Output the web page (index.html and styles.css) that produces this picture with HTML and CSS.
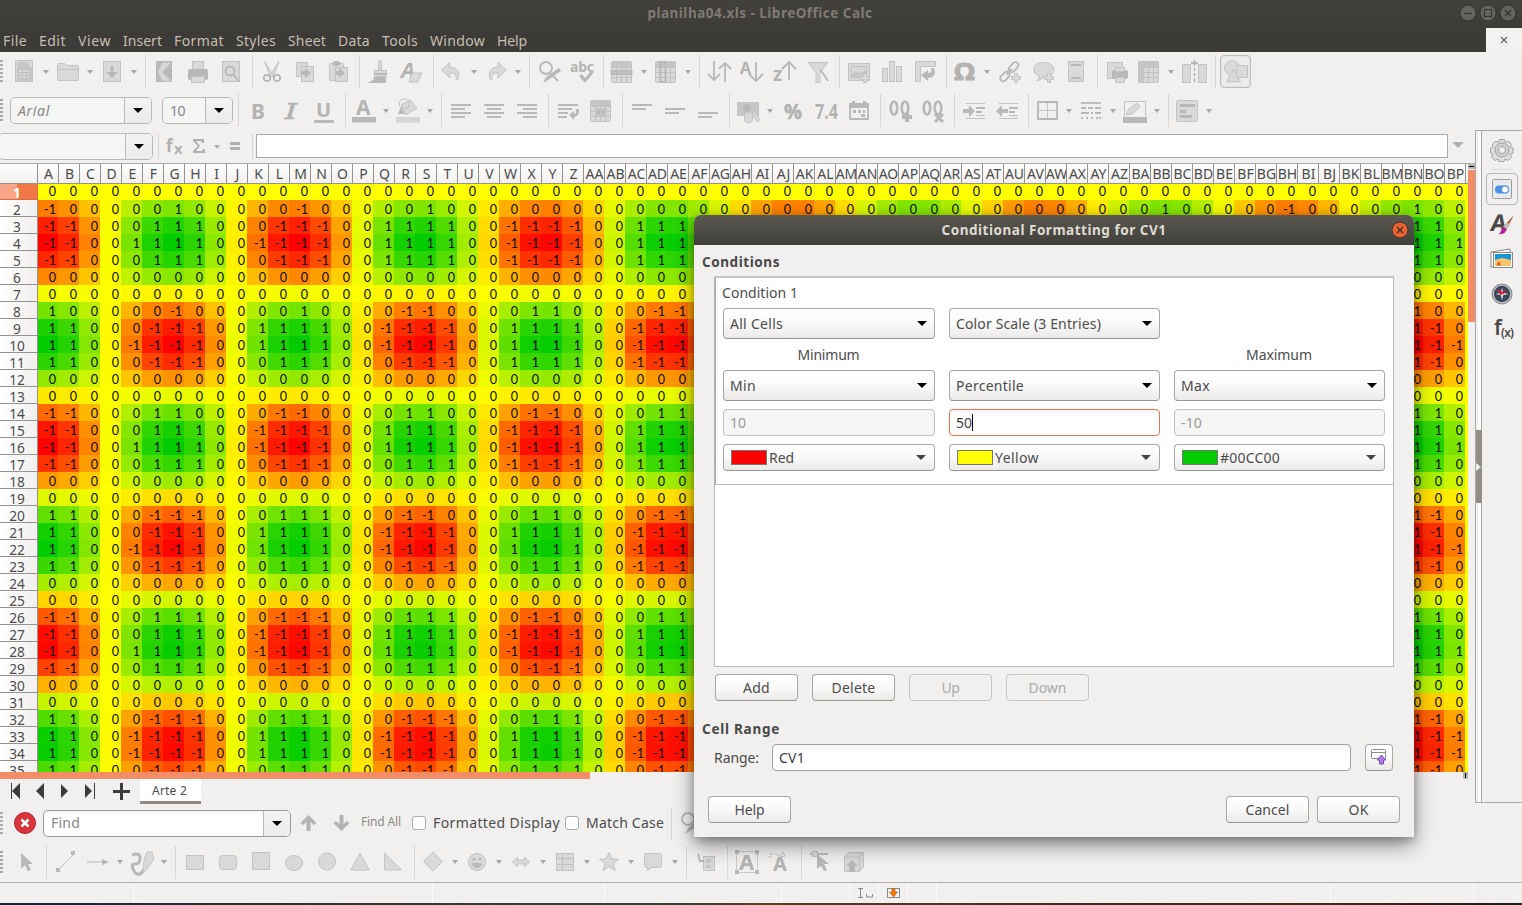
FILE: index.html
```html
<!DOCTYPE html>
<html lang="en">
<head>
<meta charset="utf-8">
<title>planilha04.xls - LibreOffice Calc</title>
<link rel="stylesheet" href="styles.css">
</head>
<body>
<div class="app">
  <header class="titlebar">
    <span class="title" data-w="225">planilha04.xls - LibreOffice Calc</span>
    <div class="winbtns">
      <svg viewBox="0 0 18 18"><circle cx="9" cy="9" r="8"/><path d="M5 9.5h8"/></svg>
      <svg viewBox="0 0 18 18"><circle cx="9" cy="9" r="8"/><path d="M5.5 5.5h7v7h-7z"/></svg>
      <svg viewBox="0 0 18 18"><circle cx="9" cy="9" r="8"/><path d="M6 6l6 6M12 6l-6 6"/></svg>
    </div>
  </header>
  <nav class="menubar">
    <span data-w="24">File</span><span data-w="27">Edit</span><span data-w="33">View</span><span data-w="39">Insert</span><span data-w="50">Format</span><span data-w="40">Styles</span><span data-w="38">Sheet</span><span data-w="32">Data</span><span data-w="36">Tools</span><span data-w="55">Window</span><span data-w="30">Help</span>
    <div class="doc-close"><svg viewBox="0 0 8 8"><path d="M1 1l6 6M7 1l-6 6"/></svg></div>
  </nav>
  <div class="toolbar"><i class="grip"></i><div class="tools" data-items="new+ open+ save+ | export print preview | cut copy paste | brush clear | undo+ redo+ | find spell | rows+ cols+ | sort asc desc filter | image chart pivot | omega+ link comment headfoot | printarea freeze+ split | shapes!"></div></div>
  <div class="toolbar"><i class="grip"></i>
    <div class="combo dim font"><em data-w="32">Arial</em><b></b></div>
    <div class="combo dim size"><span data-w="15">10</span><b></b></div>
    <div class="tools" data-items="| bold italic under | fcolor+ hilite+ | left center right | wrap merge | top middle bottom | money+ percent number date | adddec deldec | indent outdent | border+ dash+ bcolor+ | cond+"></div>
  </div>
  <div class="main">
    <div class="work">
      <div class="formula">
        <div class="combo dim namebox"><span></span><b></b></div>
        <i class="fsep"></i>
        <svg class="fx" viewBox="0 0 80 24"><text x="4" y="18" font-size="17">f</text><text x="12" y="20" font-size="15">x</text><path d="M31 5h11v4h-2l-1-2h-5l4 5-4 5h6l1-2h2v4H31v-2l5-5-5-5z"/><path d="M52 11h6l-3 4z"/><path d="M68 8h10v3H68zM68 13h10v3H68z"/></svg>
        <i class="fsep"></i>
        <div class="finput"></div>
        <svg class="fdrop" viewBox="0 0 12 6"><path d="M0 0h12L6 6z"/></svg>
      </div>
      <div class="sheetwrap">
        <div class="sheet"><div class="colheads" id="heads"></div><div class="rows" id="rows"></div></div>
        <div class="vscroll"><i></i><b></b></div>
      </div>
      <div class="hscroll"><b></b><i></i></div>
      <div class="tabs">
        <svg viewBox="0 0 140 24"><path d="M11 4h1v16h-1zM20 4v16l-8-8zM44 4v16l-8-8zM61 5v14l7-7zM85 5v14l7-7zM94 4h1v16h-1zM113 11h7V4h3v7h7v3h-7v7h-3v-7h-7z"/></svg>
        <div class="tab"><span data-w="35">Arte 2</span></div>
      </div>
    </div>
    <aside class="sidebar">
      <div class="splitter"><i></i></div>
      <div class="deck">
        <svg viewBox="0 0 32 32"><g fill="#dedede" stroke="#a2a2a2"><path d="M13.500 5.500h5l1 3 3-1.500 3 3.500-1.500 2.500 3 1v5l-3 1 1.500 3-3.500 3.500-3-1.500-1 2.500h-5l-1-2.500-3 1.500-3.500-3.500 1.500-3-2.500-1v-5l2.500-1L6.500 10 10 7l2.500 1.500z"/><circle cx="16" cy="16" r="7" fill="#cfcfcf"/><circle cx="16" cy="16" r="3.500" fill="#f1f0ee"/></g></svg>
        <hr>
        <div class="active"><svg viewBox="0 0 32 32"><rect x="6.500" y="6.500" width="19" height="19" rx="1" fill="#e7e9ea" stroke="#9a9fa1"/><rect x="9" y="12.500" width="14" height="8" rx="4" fill="#4a90e2"/><circle cx="19" cy="16.500" r="3.600" fill="#fff" stroke="#4a90e2"/></svg></div>
        <svg viewBox="0 0 32 32"><text x="4" y="23" font-size="23" font-weight="700" fill="#4a4a4a" transform="skewX(-8) translate(3 0)">A</text><path d="M28 7l-11 12 3 3z" fill="#a5592a"/><path d="M21 14l-4 5 3 3 4-5z" fill="#bbb"/><path d="M18 19l3 2.500-3 4-6 1c3-1 3-6 6-7.500z" fill="#b3219a"/></svg>
        <svg viewBox="0 0 32 32"><path d="M5 9l19-3v16L5 24z" fill="#fff" stroke="#888"/><rect x="7.500" y="9.500" width="19" height="15" fill="#fff" stroke="#888"/><path d="M9 11h16v6H9z" fill="#1797d8"/><path d="M9 17l7-2 9 2v6H9z" fill="#f7c46c"/><path d="M12 18l1 2 2-1-1 2 1 2-2-1-2 1z" fill="#e8461c"/></svg>
        <svg viewBox="0 0 32 32"><circle cx="16" cy="16" r="10" fill="#3b485c" stroke="#8e8e8e"/><circle cx="16" cy="16" r="8.800" fill="none" stroke="#c6c6c6" stroke-width="1.300"/><path d="M16 9.500l1.300 5.200 5.200 1.300-5.200 1.300L16 22.500l-1.300-5.200L9.500 16l5.200-1.300z" fill="#d3d7dd"/><path d="M10.500 10.500l7 4-3 3zM20.500 11.500l-3 5-2-2z" fill="#cc1f3a"/></svg>
        <svg viewBox="0 0 32 32"><text x="8" y="22" font-size="21" font-weight="600" fill="#4a4a4a">f</text><text x="15" y="24" font-size="12" font-weight="600" fill="#4a4a4a" textLength="13">(x)</text></svg>
      </div>
    </aside>
  </div>
  <div class="toolbar findbar"><i class="grip"></i>
    <svg class="closefind" viewBox="0 0 22 22"><circle cx="11" cy="11" r="10.500" fill="#d8343a" stroke="#b5242c"/><path d="M7.500 7.500l7 7M14.500 7.500l-7 7" stroke="#fff" stroke-width="2.600"/></svg>
    <div class="combo findbox"><span data-w="29">Find</span><b></b></div>
    <svg class="updown" viewBox="0 0 66 33"><path d="M17.500 8l8 8-2.500 2-3.500-3v9h-4v-9L12 18l-2.500-2zM50.500 24l8-8-2.500-2-3.500 3V8h-4v9L45 14l-2.500 2z"/></svg>
    <span class="findall" data-w="40">Find All</span>
    <i class="check"></i><span class="lab" data-w="127">Formatted Display</span>
    <i class="check"></i><span class="lab" data-w="78">Match Case</span>
    <div class="tools" data-items="| find"></div>
  </div>
  <div class="toolbar drawbar"><i class="grip"></i><div class="tools" data-items="select | line arrow+ curve+ | rect rrect square ellipse circle tri rtri | diamond+ smile+ dbl+ flow+ star+ callout+ | callbox | textbox fontwork | points extrude"></div></div>
  <footer class="status">
    <i style="width:134px"></i><i style="width:298px"></i><i style="width:171px"></i><i style="width:176px"></i><i style="width:67px"></i>
    <i class="mode" style="width:28px"><svg viewBox="0 0 28 18"><path d="M7 4.500h5M9.500 5v9M7 13.500h5M15.500 10v3h6v-3" fill="none" stroke="#888"/></svg></i>
    <i style="width:28px"><svg viewBox="0 0 28 18"><rect x="7.500" y="4.500" width="12" height="9" fill="#f4f4f4" stroke="#888"/><path d="M12 5h3v3h2.500l-4 5-4-5H12z" fill="#f57900" stroke="#b84f00" stroke-width=".6"/></svg></i>
    <i style="width:28px"></i><i style="width:393px"></i><i style="width:142px"></i>
  </footer>
  <div class="desktop"></div>
</div>

<section class="dialog">
  <div class="dtitle"><span data-w="225">Conditional Formatting for CV1</span><svg viewBox="0 0 18 18"><circle cx="9" cy="9" r="8"/><path d="M6 6l6 6M12 6l-6 6"/></svg></div>
  <div class="dbody">
    <h4><span data-w="78">Conditions</span></h4>
    <div class="list">
      <div class="entry">
        <p><span data-w="76">Condition 1</span></p>
        <div class="cols">
          <div class="sel"><span data-w="53">All Cells</span></div>
          <div class="sel"><span data-w="145">Color Scale (3 Entries)</span></div>
          <div></div>
          <div class="cap"><span data-w="62">Minimum</span></div><div></div><div class="cap"><span data-w="66">Maximum</span></div>
          <div class="sel"><span data-w="26">Min</span></div>
          <div class="sel"><span data-w="68">Percentile</span></div>
          <div class="sel"><span data-w="29">Max</span></div>
          <div class="inp off"><span data-w="16">10</span></div>
          <div class="inp focus"><span data-w="16">50</span></div>
          <div class="inp off"><span data-w="21">-10</span></div>
          <div class="sel col"><i class="sw red"></i><span data-w="25">Red</span></div>
          <div class="sel col"><i class="sw yellow"></i><span data-w="44">Yellow</span></div>
          <div class="sel col"><i class="sw green"></i><span data-w="60">#00CC00</span></div>
        </div>
      </div>
    </div>
    <div class="btns"><div class="btn"><span data-w="27">Add</span></div><div class="btn"><span data-w="44">Delete</span></div><div class="btn off"><span data-w="18">Up</span></div><div class="btn off"><span data-w="38">Down</span></div></div>
    <h4 class="cr"><span data-w="78">Cell Range</span></h4>
    <div class="range"><label><span data-w="45">Range:</span></label><div class="inp"><span data-w="26">CV1</span></div>
      <div class="btn pick"><svg viewBox="0 0 20 20"><rect x="2.500" y="1.500" width="14" height="9" rx="1" fill="#fff" stroke="#8b8f8c"/><path d="M3 4.500h13" stroke="#8b8f8c"/><path d="M12.500 7l4.500 5h-2.500v4h-4v-4H8z" fill="#ad7fe0" stroke="#8049b8"/></svg></div></div>
    <div class="foot"><div class="btn"><span data-w="30">Help</span></div><div class="gap"></div><div class="btn"><span data-w="44">Cancel</span></div><div class="btn"><span data-w="20">OK</span></div></div>
  </div>
</section>
<script src="app.js"></script>
</body>
</html>
```
FILE: styles.css
```css
* { box-sizing: border-box; }
body { margin: 0; width: 1522px; height: 905px; overflow: hidden; background: #f1f0ee; color: #4c4c4c; font: 14px/18px "Noto Sans", sans-serif; position: relative; }
span, em { white-space: nowrap; }
.app { display: flex; flex-direction: column; height: 905px; }

.titlebar { height: 28px; flex: none; background: linear-gradient(#42413c, #3d3c37); position: relative; text-align: center; }
.title { font-weight: 700; color: #7f7b74; font-size: 13.500px; line-height: 27px; margin-right: 2px; }
.winbtns { position: absolute; right: 5px; top: 4px; display: flex; gap: 2px; }
.winbtns svg { width: 18px; height: 18px; }
.winbtns circle { fill: #65635d; stroke: #35342f; }
.winbtns path { fill: none; stroke: #35342f; stroke-width: 1.200; }
.menubar { height: 24px; flex: none; background: #3c3b37; color: #c4bfb0; display: flex; gap: 12px; padding-left: 3px; line-height: 26px; }
.doc-close { margin-left: auto; width: 36px; background: #f3f2f1; padding-left: 14px; line-height: 0; }
.doc-close svg { width: 8px; height: 8px; margin-top: 8px; fill: none; stroke: #666; stroke-width: 1.300; }

.toolbar { height: 39px; flex: none; display: flex; align-items: center; }
.grip { width: 3px; height: 23px; margin-right: 5px; flex: none; background: repeating-linear-gradient(#a9a9a7 0 2px, transparent 2px 4px); }
.tools { display: flex; height: 33px; }
.tool { width: 33px; height: 33px; display: flex; align-items: center; padding-left: 5px; flex: none; }
.tool.split { width: 44px; padding-left: 4px; }
.tool svg { width: 24px; height: 24px; flex: none; overflow: visible; }
.tool.split::after { content: ""; border: 3px solid transparent; border-top: 4px solid #a6a6a4; border-bottom: 0; margin-left: 7px; }
.tool.on { border: 1px solid #bcbcba; border-radius: 4px; width: 31px; margin-left: 2px; padding-left: 2px; background: #ececea; box-shadow: inset 0 0 2px #ccc; }
.sep { width: 8px; flex: none; border-left: 5px solid transparent; background: linear-gradient(90deg, #d8d7d5 1px, transparent 1px) content-box; }
.a { fill: #b8b8b8; } .l { fill: #d9d9d9; stroke: #c3c3c3; } .s { fill: none; stroke: #b7b7b7; stroke-width: 1.800; } .t { fill: none; stroke: #c1c1c1; }
.m { fill: #c6c6c6; }
.tool text { fill: #b3b3b3; font-weight: 700; font-family: "Noto Sans", sans-serif; }
.tool text.serif { font-family: "DejaVu Serif", serif; }

.combo { display: flex; align-items: center; height: 27px; border: 1px solid #b9b8b5; border-radius: 5px; background: #f5f5f4; color: #878787; padding-left: 7px; flex: none; overflow: hidden; }
.combo b { margin-left: auto; width: 27px; height: 27px; border-left: 1px solid #b9b8b5; background: linear-gradient(#f3f3f3, #ebebea); display: flex; align-items: center; justify-content: center; }
.combo b::after { content: ""; border: 5px solid transparent; border-top: 5px solid #000; border-bottom: 0; }
.font { width: 142px; margin: 0 10px 0 2px; } .size { width: 71px; }
.namebox { width: 155px; margin-left: -2px; }
.findbox { width: 248px; background: linear-gradient(#f4f4f4, #fff 6px); border-color: #9b9a97; }

.main { flex: 1; display: flex; min-height: 0; }
.work { width: 1475px; display: flex; flex-direction: column; }
.formula { height: 33px; display: flex; align-items: center; flex: none; padding-bottom: 1px; }
.fsep { width: 1px; height: 25px; background: #d8d7d5; margin: 0 3px 0 5px; }
.fx { width: 80px; height: 24px; fill: #b1b1b1; font-weight: 700; margin-right: 5px; }
.finput { width: 1192px; height: 24px; background: #fff; border: 1px solid #aaa; }
.fdrop { width: 12px; height: 6px; fill: #b1b1b1; margin: 0 0 2px 4px; }

.sheetwrap { display: flex; height: 609px; flex: none; }
.sheet { width: 1468px; overflow: hidden; border-top: 1px solid #a6a5a2; }
.colheads, .row { display: flex; }
.colheads { height: 20px; border-bottom: 1px solid #96938e; background: linear-gradient(#fff, #f1f0ee); font-size: 14px; line-height: 19px; }
.colheads div { width: 21px; flex: none; overflow: hidden; border-right: 1px solid #96938e; display: flex; justify-content: center; padding-left: 1px; }
.colheads div:first-child { width: 38px; }
.row { height: 17px; background: #ff0; overflow: hidden; }
.row:first-child { height: 16px; }
.row > * { flex: none; width: 21px; height: 17px; text-align: right; padding-right: 2px; font: 12.600px/19px Lato, sans-serif; color: #0c0c06; }
.row > b + span { width: 20px; }
.row > b { width: 38px; text-align: center; font: 13.700px/20px "Noto Sans", sans-serif; border-right: 1px solid #96938e; border-bottom: 1px solid #96938e; background: linear-gradient(90deg, #fff, #f1f0ee); color: #4c4c4c; padding: 0 3px 0 0; }
.row:first-child > * { line-height: 16px; }
.row:first-child > b { height: 16px; font-weight: 700; color: #fff; border-color: #e06b3c; background: linear-gradient(90deg, #f7a487 17px, #f07746 17px); line-height: 18px; }
.vscroll { width: 7px; }
.vscroll i { display: block; height: 6px; background: #b4b4b1; margin: 0 0 1px; padding-top: 3px; }
.vscroll i::after { content: ""; display: block; height: 1px; background: #000; margin: 0 1px; }
.vscroll b { display: block; height: 152px; background: #f28d68; }
.hscroll { height: 7px; display: flex; flex: none; } .hscroll b { width: 590px; background: #f28d68; }
.hscroll i { margin-left: 873px; width: 5px; background: #000; border: 1px solid #b4b4b1; border-width: 1px 2px; }
.tabs { height: 25px; display: flex; flex: none; }
.tabs svg { width: 140px; height: 24px; fill: #3c3c3c; }
.tab { width: 61px; background: #fff; border-bottom: 3px solid #8e8a83; text-align: center; font-size: 12px; line-height: 23px; padding-right: 2px; }

.sidebar { width: 47px; height: 673px; display: flex; border: 1px solid #a9a8a5; border-right: 0; }
.splitter { width: 6px; border-right: 1px solid #a9a8a5; background: linear-gradient(90deg, #f1f0ee 2px, #fafafa 2px); }
.splitter i { display: flex; align-items: center; width: 6px; height: 73px; background: #928e87; margin-top: 299px; }
.splitter i::after { content: ""; border: 4px solid transparent; border-left: 5px solid #f1f0ee; border-right: 0; }
.deck { width: 39px; padding-top: 3px; display: flex; flex-direction: column; align-items: center; }
.deck svg { width: 32px; height: 32px; margin-bottom: 3px; flex: none; }
.deck hr { border: 0; height: 1px; width: 22px; background: #dcdbd9; margin: 0 0 3px; }
.deck .active { width: 32px; height: 32px; border: 1px solid #b8b7b4; border-radius: 4px; margin-bottom: 3px; flex: none; }
.deck .active svg { margin: -1px; }

.closefind { width: 22px; height: 22px; margin: 0 7px 0 6px; }
.findbar { padding-bottom: 1px; }
.updown { width: 66px; height: 33px; fill: #b3b3b1; margin-right: 4px; }
.findall { font-size: 12px; color: #8a8a88; margin-right: 11px; padding-bottom: 2px; }
.check { width: 14px; height: 14px; border: 1px solid #adaca9; border-radius: 3px; background: #fdfdfd; margin-right: 7px; }
.lab { margin-right: 5px; }
.lab + .tools { margin-left: -3px; }
.drawbar { padding-bottom: 1px; }
.status { height: 21px; flex: none; border-top: 1px solid #b0afac; display: flex; padding-top: 1px; }
.status i { flex: none; height: 18px; border-right: 1px solid #fbfbfa; margin-right: 1px; }
.status svg { width: 28px; height: 18px; }
.desktop { height: 2px; flex: none; background: linear-gradient(90deg, #13263a, #3a3330 25%, #2f3f38 42%, #5a4020 50%, #3f2c22 70%, #4a2a12 85%, #201c20); }

.dialog { position: absolute; left: 694px; top: 215px; width: 720px; height: 622px; background: #f1f0ee; border-radius: 7px 7px 0 0; box-shadow: 0 8px 20px rgba(0,0,0,.45), 0 2px 10px rgba(0,0,0,.2); }
.dtitle { height: 30px; border-radius: 7px 7px 0 0; background: linear-gradient(#5a5850, #403f3a); color: #dfdbd2; font-weight: 700; font-size: 13.500px; text-align: center; line-height: 30px; position: relative; }
.dtitle svg { position: absolute; right: 5px; top: 6px; width: 18px; height: 18px; } .dtitle circle { fill: #ea5f30; stroke: #35342f; } .dtitle path { stroke: #35342f; stroke-width: 1.300; }
.dbody { padding: 8px 0 0 8px; }
h4 { margin: 0; font-size: 13.500px; line-height: 18px; color: #484848; }
.list { margin: 5px 0 0 12px; width: 680px; height: 391px; background: #fff; border: 1px solid #b8b7b4; border-top-width: 2px; border-top-color: #c6c5c2; }
.entry { height: 207px; border-bottom: 1px solid #c0bfbd; border-left: 1px solid #aaa; padding: 6px 0 0 7px; }
.entry p { margin: 0 0 6px -1px; line-height: 18px; }
.cols { display: grid; grid-template-columns: 212px 211px 211px; column-gap: 14px; grid-template-rows: 31px 31px 31px 8px 27px 8px 27px; }
.cols > :nth-child(n+10) { grid-row: 5; } .cols > :nth-child(n+13) { grid-row: 7; }
.cap { text-align: center; line-height: 32px; padding-right: 1px; }
.sel, .btn { border: 1px solid #a9a8a5; border-bottom-color: #979693; border-radius: 4px; background: linear-gradient(#fff, #f9f9f9 50%, #ebeae8); }
.sel { display: flex; align-items: center; padding: 0 7px 0 6px; }
.sel::after { content: ""; margin-left: auto; border: 5px solid transparent; border-top: 5px solid #000; border-bottom: 0; }
.sel.col { padding-right: 8px; } .sel.col::after { border-top-color: #444; }
.sw { width: 36px; height: 15px; border: 1px solid #777; margin: 0 2px 0 1px; } .red { background: #f00; } .yellow { background: #ff0; } .green { background: #0c0; }
.inp { border: 1px solid #a3a29f; border-radius: 4px; background: linear-gradient(#f5f5f5, #fff 7px); padding: 0 6px; line-height: 26px; height: 27px; color: #3c3c3c; }
.inp.off { background: #f5f5f4; border-color: #c2c1be; color: #999; }
.inp.focus { border-color: #e5764d; } .focus span { border-right: 1px solid #000; padding: 1px 0; display: inline-block; line-height: 15px; }
.btn { width: 83px; height: 27px; text-align: center; line-height: 26px; }
.btn.off { color: #aaa; background: #f1f0ee; border-color: #c6c5c2; }
.btns { display: flex; gap: 14px; margin: 7px 0 0 13px; }
.cr { margin-top: 19px; }
.range { display: flex; margin: 6px 0 0 12px; height: 27px; }
.range label { width: 58px; line-height: 27px; } .range .inp { width: 579px; }
.range .pick { width: 28px; margin-left: 14px; line-height: 0; padding-top: 3px; } .pick svg { width: 20px; height: 20px; }
.foot { display: flex; margin: 25px 14px 0 6px; gap: 8px; } .gap { flex: 1; }
```
FILE: app.js
```js
const T = (x, y, s, t, extra = '') => `<text x="${x}" y="${y}" font-size="${s}" ${extra}>${t}</text>`;
const P = (c, d) => `<path class="${c}" d="${d}"/>`;
const R = (c, x, y, w, h, r = 0) => `<rect class="${c}" x="${x}" y="${y}" width="${w}" height="${h}" rx="${r}"/>`;
const C = (c, x, y, r) => `<circle class="${c}" cx="${x}" cy="${y}" r="${r}"/>`;
const plus = P('l', 'M16.5 13.500h3v3h3v3h-3v3h-3v-3h-3v-3h3z');
const grid = R('l', 1.5, 1.5, 20, 21, 1) + R('m', 2, 2, 19, 5) + P('t', 'M2 7.500h20M2 12.500h20M2 17.500h20M6.500 2v20M11.500 2v20M16.500 2v20');
const bars = a => `<g class="a">${a.map(([x, y, w]) => `<rect x="${x}" y="${y}" width="${w}" height="2"/>`).join('')}</g>`;
const zero = x => `<ellipse class="s" style="stroke-width:2.600" cx="${x}" cy="9" rx="3.300" ry="6.500"/>`;
const zeros = zero(6) + zero(17);
const I = {
  new: R('l', 3.5, .5, 17, 21) + P('m', 'M5 2h9l6 6v13H5z') + R('l', 6.5, 9.5, 11, 9) + P('t', 'M6 12.500h12M6 15.500h12M10.500 9v9M14.500 9v9'),
  open: P('l', 'M1.500 4.500q0-1 1-1h6l2 2h11q1 0 1 1v14h-21z') + P('t', 'M2 9.500h20'),
  save: R('l', 3.5, 1.5, 17, 20) + P('a', 'M10.500 6h3v6h4l-5.500 6-5.500-6h4z'),
  export: R('a', 3, 1, 16, 21) + P('l', 'M9 2.500h9L10 12l8 9H9L5 12z') + P('t', 'M18 3L9 12l9 9'),
  print: R('l', 6.5, 1.5, 11, 9) + R('a', 2, 9, 20, 11, 2) + R('l', 5.5, 16.5, 13, 6),
  preview: R('l', 3.5, 1.5, 17, 20) + C('s', 11, 11, 4.5) + P('s', 'M14 14l6 7'),
  cut: P('l', 'M4.500 1.500l9 14-3 1.500zM19 1.500l-9 14 3 1.500z') + C('s', 7, 18, 3.2) + C('s', 17, 18, 3.2),
  copy: R('l', 3.5, 2.5, 11, 14) + R('l', 8.5, 6.5, 12, 15) + P('a', 'M8 11h4V8l6 5-6 5v-3H8z'),
  paste: R('l', 3.5, 3.5, 14, 17, 1) + R('a', 7, 1, 7, 5, 2) + R('l', 9.5, 7.5, 12, 14) + P('a', 'M9 11h4V8l6 5-6 5v-3H9z'),
  brush: R('l', 11.500, .5, 3, 10, 1.5) + R('l', 7.500, 10.5, 12, 6) + P('a', 'M7 17h12v6H0c4-1 7-3 7-6zM7 13h13v2H7z'),
  clear: T(1, 18, 22, 'A', 'font-style="italic"') + P('l', 'M12 13h10l-4 9H9z'),
  undo: P('l', 'M1.500 10L10 2.500v5c7-.500 10 4 8 11-1 2-2 2-2 1 1-5-2-7-6-6.500v5z'),
  redo: P('l', 'M22.500 10L14 2.500v5c-7-.500-10 4-8 11 1 2 2 2 2 1-1-5 2-7 6-6.500v5z'),
  find: C('s', 9, 8, 6) + P('s', 'M13 13l8 8') + P('a', 'M22 8l2 3-13 9-5 3 3-6z'),
  spell: T(0, 12, 14, 'abc', 'textLength="24"') + P('a', 'M9 16l3-2 3 4 7-8 2 2-9 11z'),
  rows: grid + R('s', 1.5, 11, 20, 3), cols: grid + R('s', 6.5, 2, 5, 20),
  sort: P('s', 'M7 1v19M1 14l6 6 6-6M18 22V3M12 9l6-6 6 6'),
  asc: T(0, 14, 16, 'A') + P('s', 'M16 2v19M9 14l7 7 7-7'),
  desc: T(0, 21, 19, 'z') + P('s', 'M16 20V2M9 9l7-7 7 7'),
  filter: P('l', 'M2 2.500h20l-8 10v10h-4v-10z') + P('s', 'M14 9l8 12'),
  image: R('l', 1.5, 3.5, 21, 17) + R('t', 4.5, 6.5, 15, 11) + P('m', 'M4 15l5-4 4 2 7-3v8H4z') + plus,
  chart: R('l', 2.5, 8.5, 5, 13) + R('l', 9.5, 1.5, 5, 20) + R('l', 16.5, 6.5, 5, 15),
  pivot: P('l', 'M2.500 1.500h20v5h-15v15h-5z') + P('a', 'M8 15l7-5v3c4 0 4-3 3-5h3c3 7-2 10-6 10v3z'),
  omega: T(1, 20, 23, 'Ω', 'textLength="21" lengthAdjust="spacingAndGlyphs" stroke="#b3b3b3"'),
  link: `<g transform="rotate(-48 12 11)"><rect class="s" x="-1" y="8" width="11" height="6" rx="3"/><rect class="s" x="12" y="8" width="11" height="6" rx="3"/><path class="s" d="M7 11h8"/></g>` + plus,
  comment: P('l', 'M12 2.500c7 0 11 3 11 7.500s-5 7-10 7c-2 2-4 3-7 4 2-2 2-4 2-5-9-4-6-13.500 4-13.500z') + plus,
  headfoot: R('l', 4.5, 1.5, 15, 20) + P('s', 'M7 5h10M7 18h10'),
  printarea: R('l', 2.5, 2.5, 15, 16) + R('a', 7, 10, 16, 9, 2) + R('l', 10.5, 7.5, 9, 4) + R('l', 10.5, 17.5, 9, 5),
  freeze: grid + P('m', 'M2 2h5v20H2z') + P('t', 'M2 7.500h5M2 12.500h5M2 17.500h5'),
  split: R('l', .5, 4.5, 8, 18) + R('l', 16.5, 4.5, 8, 18) + P('s', 'M12.500 0v6M9 3h7M12.500 8v3M12.500 13v3M12.500 18v4'),
  shapes: C('l', 9, 8, 7.5) + R('l', 13.5, 5.5, 11, 12) + P('l', 'M10.500 9l7 13h-14z'),
  bold: T(5, 20, 22, 'B', 'textLength="14" lengthAdjust="spacingAndGlyphs"'),
  italic: T(6, 20, 22, 'I', 'font-style="italic" class="serif" textLength="12" lengthAdjust="spacingAndGlyphs" style="font-weight:400" stroke="#b3b3b3" stroke-width=".7"'),
  under: T(4, 18, 20, 'U') + R('a', 2, 21, 20, 3),
  fcolor: T(4, 16, 21, 'A') + R('a', 0, 18, 24, 5.500),
  hilite: P('l', 'M5 6l9-5 7 8-11 7z') + C('t', 8, 5, 5) + P('a', 'M2 15l3-7 4 7z') + `<rect x="0" y="18" width="24" height="5.500" fill="#d4d4d4"/>`,
  left: bars([[2, 5, 20], [2, 9, 14], [2, 13, 20], [2, 17, 14]]),
  center: bars([[2, 5, 20], [5, 9, 14], [2, 13, 20], [5, 17, 14]]),
  right: bars([[2, 5, 20], [8, 9, 14], [2, 13, 20], [8, 17, 14]]),
  wrap: bars([[2, 5, 20], [2, 9, 14], [2, 13, 10], [2, 17, 9]]) + P('a', 'M13 16l5-4v3q3 0 2-5h3q1 7-5 8v3z'),
  merge: grid + P('m', 'M6 9h12v8H6z') + P('a', 'M7 13l4-3v6zM17 13l-4-3v6z'),
  top: bars([[2, 5, 20], [2, 9, 14]]), middle: bars([[2, 9, 20], [2, 13, 14]]), bottom: bars([[2, 13, 20], [2, 17, 14]]),
  money: R('m', 1, 3, 22, 14) + C('a', 11, 9, 4) + R('l', 8.5, 13.5, 8, 10, 3) + P('l', 'M16 14l3-1 5 8-3 2z'),
  percent: T(3, 20, 21, '%', 'textLength="18" lengthAdjust="spacingAndGlyphs" stroke="#b3b3b3" stroke-width=".6"'),
  number: T(1, 20, 21, '7.4', 'textLength="23" lengthAdjust="spacingAndGlyphs"'),
  date: P('s', 'M3 6h18v14H3z') + P('a', 'M2 4h3V2h3v2h8V2h3v2h3v5H2z') + `<g class="a"><path d="M6 11h3v3H6zM11 11h3v3h-3zM16 11h2v3h-2zM14 15h4v3h-4z"/></g>`,
  adddec: zeros + P('a', 'M17 13h4v3h3v4h-3v3h-4v-3h-3v-4h3z'),
  deldec: zeros + `<path class="s" style="stroke-width:3" d="M14 15l8 8M22 15l-8 8"/>`,
  indent: P('a', 'M1 10h6V6l6 6-6 6v-4H1z') + bars([[14, 8, 9], [14, 12, 6]]) + P('t', 'M4 4.500h19M14 16.500h9M4 19.500h19'),
  outdent: P('a', 'M13 10H7V6l-6 6 6 6v-4h6z') + bars([[14, 8, 9], [14, 12, 6]]) + P('t', 'M4 4.500h19M14 16.500h9M4 19.500h19'),
  border: P('s', 'M3 3h19v17H3z') + P('t', 'M12.500 4v16M4 11.500h17'),
  dash: P('s', 'M2 4h20') + P('s', 'M2 9h5m2 0h5m2 0h6M2 14h8m2 0h2m2 0h6M2 19h2m3 0h2m3 0h2m3 0h2m1 0h2'),
  bcolor: P('t', 'M1.500 18V2.500h21V18') + P('l', 'M3 16l3-6 8-6 3 4-8 7z') + R('a', 0, 18, 24, 6),
  cond: R('l', 1.5, 1.5, 21, 21, 1) + R('a', 5, 5, 15, 3) + R('a', 5, 11, 6, 3) + R('a', 5, 16, 12, 3),
  select: P('a', 'M8 3v16l4-4 3 6 3-1-3-6h5z'),
  line: P('t', 'M4 20L20 4') + R('a', 2, 18, 4, 4) + R('a', 17, 1, 4, 4),
  arrow: R('a', 1, 11.5, 17, 1) + P('a', 'M16 9l7 3-7 3z'),
  curve: `<path class="s" style="stroke-width:3" d="M2 5q8-3 8 3t-5 6-1 7 10-1"/>` + P('l', 'M17 2h5l2 7-8 11-3 2 1-12z'),
  rect: R('l', 3.5, 5.5, 17, 14), rrect: R('l', 3.5, 5.5, 17, 14, 3), square: R('l', 3.5, 2.5, 17, 17),
  ellipse: `<ellipse class="l" cx="12" cy="13" rx="8.500" ry="7.500"/>`, circle: C('l', 12, 11.5, 8.5),
  tri: P('l', 'M12 3l9 17H3z'), rtri: P('l', 'M3.500 3v17h17z'), diamond: P('l', 'M12 2l9.500 9.500L12 21l-9.500-9.500z'),
  smile: C('l', 12, 12, 8.5) + C('a', 9, 9, 1.5) + C('a', 15, 9, 1.5) + P('a', 'M7 13h10q-1 5-5 5t-5-5z'),
  dbl: P('l', 'M3.500 12l5-5v3h7V7l5 5-5 5v-3h-7v3z'),
  flow: R('l', 3.5, 3.5, 17, 17) + P('t', 'M9.500 4v16M3 8.500h18M3 14.500h18'),
  star: P('l', 'M12 2.500l2.600 6.300 6.900.500-5.300 4.300 1.800 6.900-6-3.800-6 3.800 1.800-6.900-5.300-4.300 6.900-.5z'),
  callout: P('l', 'M5.500 3.500h13q2 0 2 2v10q0 2-2 2H11l-5 3 1-3H5.500q-2 0-2-2v-10q0-2 2-2z'),
  callbox: R('l', 9.5, 6.5, 11, 14) + P('s', 'M4 4l2 7h4') + R('m', 12, 9, 5, 4) + R('m', 12, 15, 5, 3),
  textbox: `<rect class="s" style="stroke-width:1" x="1.500" y="1.500" width="21" height="21" stroke-dasharray="2 1"/>` + T(4, 20, 22, 'A') + `<g class="a"><path d="M0 0h4v4H0zM20 0h4v4h-4zM0 20h4v4H0zM20 20h4v4h-4z"/></g>`,
  fontwork: T(5, 21, 20, 'A') + P('t', 'M0 7h4M2 4h3M7 4l5 2 3-4 2 4-5 1'),
  points: P('s', 'M1 4h18') + R('l', 3.5, 1.5, 5, 5) + P('a', 'M8 4v15l4-3 3 5 3-1-3-6h5z'),
  extrude: P('l', 'M2.500 7l4-4.500h15v14l-4 5h-15zM2.500 7h15v14M17.500 7l4-4.500') + P('a', 'M10 10l6 6h-3v6H7v-6H4z'),
};
document.querySelectorAll('[data-items]').forEach(el => {
  el.innerHTML = el.dataset.items.split(' ').map(k => {
    if (k === '|') return '<div class="sep"></div>';
    const name = k.replace(/[+!]/, '');
    return `<div class="tool${k.endsWith('+') ? ' split' : ''}${k.endsWith('!') ? ' on' : ''}"><svg viewBox="0 0 24 24">${I[name]}</svg></div>`;
  }).join('');
});

const STEP = 0.531, COLS = 68, ROWS = 35;
const heads = document.getElementById('heads'), rows = document.getElementById('rows');
const colName = i => (i > 25 ? String.fromCharCode(64 + Math.floor(i / 26)) : '') + String.fromCharCode(65 + i % 26);
heads.innerHTML = '<div></div>' + Array.from({ length: COLS }, (_, i) => `<div>${colName(i)}</div>`).join('');
const shade = v => v < 0 ? `rgb(255,${Math.round(255 * (1 + v))},0)` : `rgb(${Math.round(255 * (1 - v))},${Math.round(255 - 51 * v)},0)`;
let html = '';
for (let r = 0; r < ROWS; r++) {
  html += `<div class="row"><b>${r + 1}</b>`;
  for (let c = 0; c < COLS; c++) {
    const v = -Math.sin(r * STEP) * Math.cos(c * STEP);
    html += `<span style="background:${shade(v)}">${Math.round(v) || 0}</span>`;
  }
  html += '</div>';
}
rows.innerHTML = html;

// Tune letter spacing so that each label fills its nominal width.
document.querySelectorAll('[data-w]').forEach(el => {
  const range = document.createRange();
  range.selectNodeContents(el);
  const extra = (el.dataset.w - range.getBoundingClientRect().width) / el.textContent.length;
  el.style.letterSpacing = extra.toFixed(3) + 'px';
});
```
